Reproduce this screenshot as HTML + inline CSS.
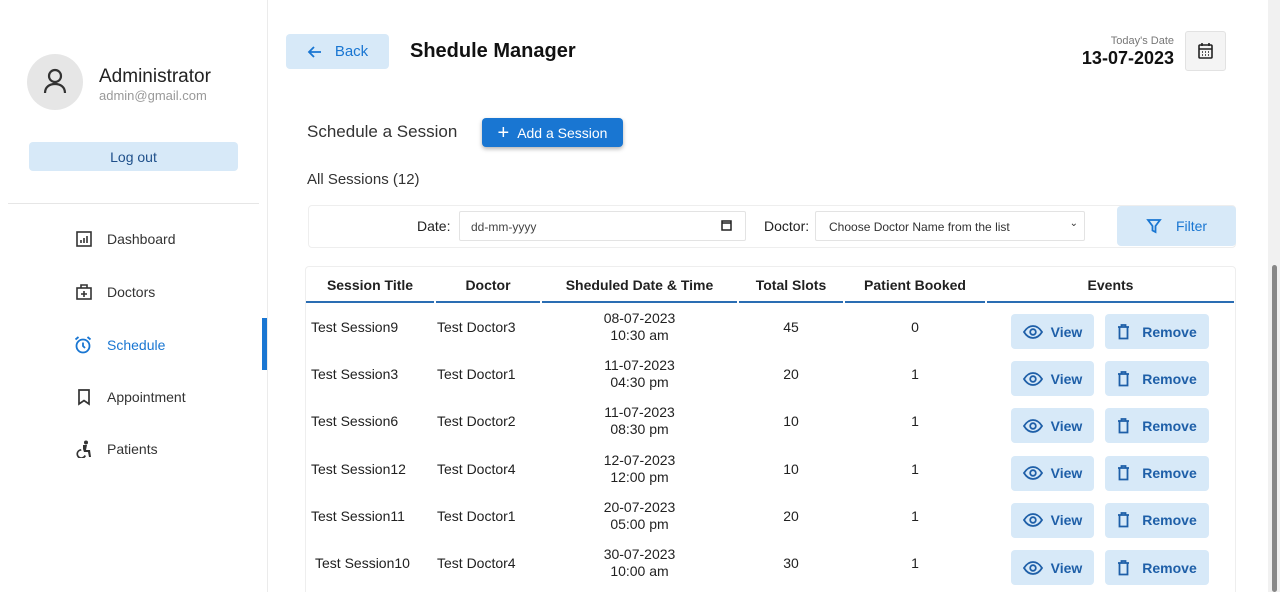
<!DOCTYPE html>
<html style="overflow:hidden;height:592px"><head><meta charset="utf-8"><style>
*{box-sizing:border-box;margin:0;padding:0}
body{width:1280px;height:592px;overflow:hidden;background:#fff;font-family:"Liberation Sans",sans-serif;color:#212121;position:relative}
.abs{position:absolute}
.side{left:0;top:0;width:268px;height:592px;border-right:1px solid #ebebeb}
.nav{position:absolute;left:75px;font-size:14px;color:#333;display:flex;align-items:center}
.nav svg{margin-right:14px}
.btn{position:absolute;background:#d7e9f8;border-radius:4px;color:#1565c0;font-size:14px;font-weight:bold;display:flex;align-items:center;justify-content:center}
.cell{position:absolute;font-size:14px;text-align:center;line-height:17px}
</style></head><body>
<div class="abs side"></div>
<div class="abs" style="left:27px;top:54px;width:56px;height:56px;border-radius:50%;background:#e6e6e6"></div>
<svg class="abs" style="left:40px;top:66px" width="30" height="30" viewBox="0 0 30 30" fill="none" stroke="#333" stroke-width="2.2"><circle cx="15" cy="10" r="6"/><path d="M5 27c0-6 4.5-9 10-9s10 3 10 9"/></svg>
<div class="abs" style="left:99px;top:66px;font-size:19px;color:#222">Administrator</div>
<div class="abs" style="left:99px;top:88px;font-size:13px;color:#999">admin@gmail.com</div>
<div class="btn" style="left:29px;top:142px;width:209px;height:29px;font-weight:normal;font-size:14px;color:#1e4f8a">Log out</div>
<div class="abs" style="left:8px;top:203px;width:251px;height:1px;background:#e6e6e6"></div>
<div class="nav" style="top:230px"><svg width="18" height="18" viewBox="0 0 18 18" fill="none" stroke="#333" stroke-width="1.6"><rect x="2" y="2" width="14" height="14"/><path d="M6 13v-3M9 13V8M12 13V6"/></svg>Dashboard</div>
<div class="nav" style="top:283px"><svg width="18" height="18" viewBox="0 0 18 18" fill="none" stroke="#333" stroke-width="1.6"><rect x="2" y="5" width="14" height="11"/><path d="M6 5V2h6v3M9 8v6M6 11h6"/></svg>Doctors</div>
<div class="nav" style="top:335px;left:73px;color:#1976d2"><svg width="20" height="20" viewBox="0 0 20 20" fill="none" stroke="#1976d2" stroke-width="1.8"><circle cx="10" cy="11" r="6.5"/><path d="M10 7.5V11l2 2M2.5 4.5l3-2.5M17.5 4.5l-3-2.5"/></svg>Schedule</div>
<div class="abs" style="left:262px;top:318px;width:5px;height:52px;background:#1976d2"></div>
<div class="nav" style="top:388px"><svg width="18" height="18" viewBox="0 0 18 18" fill="none" stroke="#333" stroke-width="1.7"><path d="M4 2h10v14l-5-3.5L4 16z"/></svg>Appointment</div>
<div class="nav" style="top:440px"><svg width="18" height="18" viewBox="0 0 18 18" fill="#333"><circle cx="11" cy="2.5" r="2"/><path d="M8 5h4l-1 5h4l1 7h-2l-1-5H9L8 9z"/><path d="M6 9a5 5 0 1 0 5 7l-1.5-1A3.3 3.3 0 1 1 6.5 10.6z"/></svg>Patients</div>

<div class="btn" style="left:286px;top:34px;width:103px;height:35px;font-weight:normal;font-size:15px;color:#1976d2"><svg width="16" height="16" viewBox="0 0 16 16" fill="none" stroke="#1976d2" stroke-width="1.8" style="margin-right:12px"><path d="M14 8H2M7 3L2 8l5 5"/></svg>Back</div>
<div class="abs" style="left:410px;top:40px;font-size:20px;font-weight:bold;color:#111">Shedule Manager</div>
<div class="abs" style="left:1060px;top:35px;width:114px;text-align:right;font-size:11px;color:#777">Today's Date</div>
<div class="abs" style="left:1040px;top:48px;width:134px;text-align:right;font-size:18px;font-weight:bold;color:#111">13-07-2023</div>
<div class="abs" style="left:1185px;top:31px;width:41px;height:40px;background:#f4f4f4;border:1px solid #e2e2e2;border-radius:3px"></div>
<svg class="abs" style="left:1197px;top:42px" width="17" height="18" viewBox="0 0 17 18" fill="none" stroke="#222" stroke-width="1.6"><rect x="2" y="3" width="13" height="13" rx="1"/><path d="M2 7h13M5 1v3M12 1v3M5 10h1M8 10h1M11 10h1M5 13h1M8 13h1M11 13h1"/></svg>

<div class="abs" style="left:307px;top:122px;font-size:17px;color:#333">Schedule a Session</div>
<div class="btn" style="left:482px;top:118px;width:141px;height:29px;background:#1976d2;color:#fff;font-weight:normal;font-size:14px;box-shadow:0 2px 4px rgba(0,0,0,.3)"><span style="font-size:20px;margin-right:8px;line-height:0">+</span>Add a Session</div>
<div class="abs" style="left:307px;top:171px;font-size:15px;color:#333">All Sessions (12)</div>

<div class="abs" style="left:308px;top:205px;width:928px;height:43px;border:1px solid #eee;border-radius:4px"></div>
<div class="abs" style="left:417px;top:218px;font-size:14px">Date:</div>
<div class="abs" style="left:459px;top:211px;width:287px;height:30px;border:1px solid #e3e3e3;border-radius:2px;font-size:12px;color:#444;padding:8px 11px">dd-mm-yyyy</div>
<svg class="abs" style="left:721px;top:220px" width="11" height="11" viewBox="0 0 11 11" fill="none" stroke="#222" stroke-width="1.5"><rect x="1" y="1" width="9" height="9"/><path d="M1 3h9"/></svg>
<div class="abs" style="left:764px;top:218px;font-size:14px">Doctor:</div>
<div class="abs" style="left:815px;top:211px;width:270px;height:30px;border:1px solid #e3e3e3;border-radius:2px;font-size:12px;color:#333;padding:8px 13px">Choose Doctor Name from the list<span style="position:absolute;right:6px;top:6px;font-size:10px">&#8964;</span></div>
<div class="btn" style="left:1117px;top:206px;width:119px;height:40px;font-weight:normal;font-size:14px;color:#1976d2"><svg width="16" height="16" viewBox="0 0 16 16" fill="none" stroke="#1976d2" stroke-width="1.8" style="margin-right:14px"><path d="M2 2h12l-4.5 6v6l-3-1.5V8z"/></svg>Filter</div>

<div class="abs" style="left:305px;top:266px;width:931px;height:330px;border:1px solid #eee;border-radius:4px"></div>
<div id="hdr"></div>
<div class="abs" style="left:1268px;top:0;width:12px;height:592px;background:#f1f1f1"></div>
<div class="abs" style="left:1272px;top:265px;width:5px;height:327px;background:#888;border-radius:3px"></div>
<script>
var cols=[[306,434,"Session Title"],[436,540,"Doctor"],[542,737,"Sheduled Date &amp; Time"],[739,843,"Total Slots"],[845,985,"Patient Booked"],[987,1234,"Events"]];
var h="";
cols.forEach(function(c){h+='<div class="cell" style="left:'+c[0]+'px;top:277px;width:'+(c[1]-c[0])+'px;font-weight:bold">'+c[2]+'</div><div class="abs" style="left:'+c[0]+'px;top:301px;width:'+(c[1]-c[0])+'px;height:2px;background:#2a6db3"></div>';});
var rows=[["Test Session9","Test Doctor3","08-07-2023","10:30 am","45","0"],["Test Session3","Test Doctor1","11-07-2023","04:30 pm","20","1"],["Test Session6","Test Doctor2","11-07-2023","08:30 pm","10","1"],["Test Session12","Test Doctor4","12-07-2023","12:00 pm","10","1"],["Test Session11","Test Doctor1","20-07-2023","05:00 pm","20","1"],["Test Session10","Test Doctor4","30-07-2023","10:00 am","30","1"]];
var eye='<svg width="20" height="14" viewBox="0 0 20 14" fill="none" stroke="#1e5fa8" stroke-width="1.8" style="margin-right:8px"><path d="M1 7c2.5-4 5.5-6 9-6s6.5 2 9 6c-2.5 4-5.5 6-9 6S3.5 11 1 7z"/><circle cx="10" cy="7" r="2.8"/></svg>';
var bin='<svg width="13" height="16" viewBox="0 0 13 16" fill="none" stroke="#1e5fa8" stroke-width="1.8" style="margin-right:12px"><path d="M1 3h11M4.5 3V1h4v2M2.5 3.5v11h8v-11"/></svg>';
rows.forEach(function(r,i){var y=327+i*47.2;
h+='<div class="cell" style="left:'+(i==5?315:311)+'px;top:'+(y-8)+'px;text-align:left">'+r[0]+'</div>';
h+='<div class="cell" style="left:437px;top:'+(y-8)+'px;text-align:left">'+r[1]+'</div>';
h+='<div class="cell" style="left:542px;top:'+(y-17)+'px;width:195px">'+r[2]+'<br>'+r[3]+'</div>';
h+='<div class="cell" style="left:739px;top:'+(y-8)+'px;width:104px">'+r[4]+'</div>';
h+='<div class="cell" style="left:845px;top:'+(y-8)+'px;width:140px">'+r[5]+'</div>';
h+='<div class="btn" style="left:1011px;top:'+(y-13)+'px;width:83px;height:35px;color:#1e5fa8">'+eye+'View</div>';
h+='<div class="btn" style="left:1105px;top:'+(y-13)+'px;width:104px;height:35px;color:#1e5fa8">'+bin+'Remove</div>';});
document.getElementById("hdr").outerHTML=h;
</script>
</body></html>
